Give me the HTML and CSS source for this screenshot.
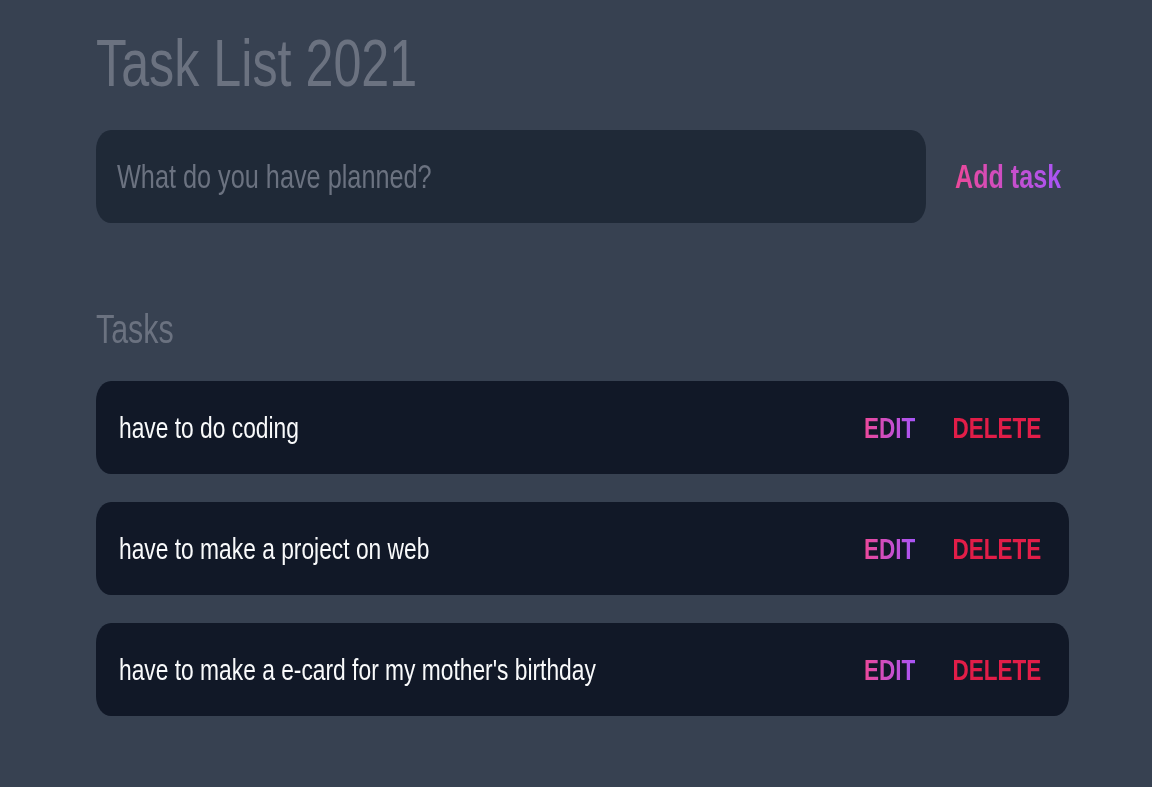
FILE: index.html
```html
<!DOCTYPE html>
<html lang="en">
<head>
<meta charset="utf-8">
<title>Task List 2021</title>
<link rel="stylesheet" href="styles.css">
</head>
<body>
  <main class="app">
    <h1 class="title"><span class="sx">Task List 2021</span></h1>
    <form class="new-task">
      <div class="field">
        <input class="field-input" id="new-task" type="text" aria-label="What do you have planned?">
        <label class="field-label" for="new-task"><span class="sx">What do you have planned?</span></label>
      </div>
      <button class="add-btn" type="button"><span class="sx grad">Add task</span></button>
    </form>
    <section class="tasks">
      <h2 class="tasks-heading"><span class="sx">Tasks</span></h2>
      <div class="task-list">
        <div class="task">
          <span class="task-text sx">have to do coding</span>
          <div class="actions">
            <button class="action" type="button"><span class="sx sx-r grad">EDIT</span></button>
            <button class="action delete" type="button"><span class="sx sx-r">DELETE</span></button>
          </div>
        </div>
        <div class="task">
          <span class="task-text sx">have to make a project on web</span>
          <div class="actions">
            <button class="action" type="button"><span class="sx sx-r grad">EDIT</span></button>
            <button class="action delete" type="button"><span class="sx sx-r">DELETE</span></button>
          </div>
        </div>
        <div class="task">
          <span class="task-text sx">have to make a e-card for my mother's birthday</span>
          <div class="actions">
            <button class="action" type="button"><span class="sx sx-r grad">EDIT</span></button>
            <button class="action delete" type="button"><span class="sx sx-r">DELETE</span></button>
          </div>
        </div>
      </div>
    </section>
  </main>
</body>
</html>
```
FILE: styles.css
```css
html, body {
  margin: 0;
  height: 100%;
  background: #374151;
  overflow: hidden;
}
body {
  font-family: "Liberation Sans", Arial, sans-serif;
}
/* the UI text is horizontally condensed */
.sx {
  display: inline-block;
  white-space: nowrap;
  transform: scaleX(0.75);
  transform-origin: left center;
}
.sx-r {
  transform-origin: right center;
}
.app {
  width: 973px;
  margin-left: 96px;
  padding-top: 30px;
}
.title {
  margin: 0;
  font-size: 67px;
  line-height: 66px;
  font-weight: 400;
  color: #6b7280;
}
.new-task {
  display: flex;
  align-items: center;
  margin: 34px 0 0;
}
.field {
  position: relative;
  flex: 0 0 830px;
  height: 93px;
}
.field-input {
  width: 100%;
  height: 100%;
  box-sizing: border-box;
  border: 0;
  border-radius: 15px / 20px;
  background: #1f2937;
  padding: 0 21px;
  font: 33.7px "Liberation Sans", Arial, sans-serif;
  color: #f3f4f6;
  outline: none;
}
.field-label {
  position: absolute;
  left: 21px;
  top: 0;
  bottom: 0;
  display: flex;
  align-items: center;
  font-size: 33.7px;
  color: #6b7280;
  pointer-events: none;
}
.add-btn {
  margin-left: 29px;
  background: none;
  border: 0;
  padding: 0;
  font: 700 33.5px "Liberation Sans", Arial, sans-serif;
  cursor: pointer;
}
.grad {
  background: linear-gradient(to right, #ec4899, #a855f7);
  -webkit-background-clip: text;
  background-clip: text;
  color: transparent;
}
.tasks {
  margin-top: 87px;
}
.tasks-heading {
  margin: 0;
  font-size: 40.5px;
  line-height: 39px;
  font-weight: 400;
  color: #6b7280;
}
.task-list {
  display: flex;
  flex-direction: column;
  gap: 28px;
  margin-top: 32px;
}
.task {
  display: flex;
  align-items: center;
  justify-content: space-between;
  height: 93px;
  box-sizing: border-box;
  background: #111827;
  border-radius: 15px / 20px;
  padding: 0 28px 0 23px;
}
.task-text {
  font-size: 30.4px;
  color: #f9fafb;
}
.actions {
  display: flex;
  align-items: center;
  gap: 7px;
}
.action {
  background: none;
  border: 0;
  padding: 0;
  font: 700 30px "Liberation Sans", Arial, sans-serif;
  cursor: pointer;
}
.delete {
  color: #e11d48;
}
```
